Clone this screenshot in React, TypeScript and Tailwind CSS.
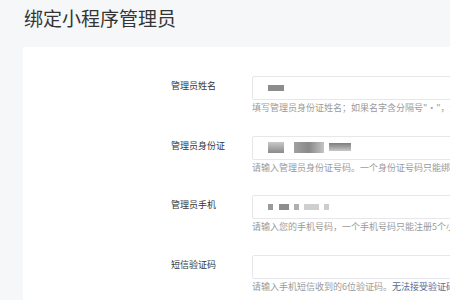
import React from "react";

type Block = { w: number; h: number; ml: number; mt?: number; c: string };

type Field = {
  label: string;
  hint: React.ReactNode;
  blocks: Block[];
};

const fields: Field[] = [
  {
    label: "管理员姓名",
    hint: "填写管理员身份证姓名；如果名字含分隔号\"·\"，请勿省略。",
    blocks: [{ w: 16, h: 6, ml: 15, c: "bg-[#8c8c8c]" }],
  },
  {
    label: "管理员身份证",
    hint: "请输入管理员身份证号码。一个身份证号码只能绑定5个小程序。",
    blocks: [
      { w: 16, h: 11, ml: 15, c: "bg-gradient-to-b from-[#c9c9c9] to-[#8a8a8a]" },
      { w: 30, h: 11, ml: 10, c: "bg-gradient-to-r from-[#a0a0a0] via-[#8a8a8a] to-[#c4c4c4]" },
      { w: 22, h: 8, ml: 5, mt: -2, c: "bg-gradient-to-b from-[#7c7c7c] to-[#c8c8c8]" },
    ],
  },
  {
    label: "管理员手机",
    hint: "请输入您的手机号码，一个手机号码只能注册5个小程序。",
    blocks: [
      { w: 5, h: 6, ml: 15, c: "bg-[#9a9a9a]" },
      { w: 10, h: 6, ml: 6, c: "bg-[#8d8d8d]" },
      { w: 5, h: 6, ml: 5, c: "bg-[#b0b0b0]" },
      { w: 15, h: 6, ml: 5, c: "bg-[#cfcfcf]" },
      { w: 5, h: 6, ml: 5, c: "bg-[#cdcdcd]" },
    ],
  },
  {
    label: "短信验证码",
    hint: (
      <>
        请输入手机短信收到的6位验证码。
        <span className="text-[#576b95]">无法接受验证码？</span>
      </>
    ),
    blocks: [],
  },
];

export default function App() {
  return (
    <div
      className="w-[450px] h-[300px] overflow-hidden bg-[#f6f7f9]"
      style={{ fontFamily: '"Noto Sans CJK SC", "Noto Sans", sans-serif' }}
    >
      <h1 className="pl-[24px] pt-[5px] text-[19px] leading-[26px] text-[#353535] font-normal">
        绑定小程序管理员
      </h1>
      <div className="ml-[23px] mt-[16px] w-[600px] h-[400px] bg-white pt-[29px] pl-[148px]">
        {fields.map((f) => (
          <div key={f.label} className="flex mb-[21.7px]">
            <div className="w-[81px] shrink-0 text-[9px] leading-[20px] text-[#353535]">
              {f.label}
            </div>
            <div className="flex-1">
              <div className="h-[24px] w-[300px] border border-[#e7e7eb] rounded-[2px] flex items-center">
                {f.blocks.map((b, i) => (
                  <div
                    key={i}
                    className={`${b.c} blur-[0.4px] shrink-0`}
                    style={{ width: b.w, height: b.h, marginLeft: b.ml, marginTop: b.mt ?? 0 }}
                  />
                ))}
              </div>
              <div className="mt-[2px] text-[9px] leading-[12px] text-[#9a9a9a] whitespace-nowrap">
                {f.hint}
              </div>
            </div>
          </div>
        ))}
      </div>
    </div>
  );
}
